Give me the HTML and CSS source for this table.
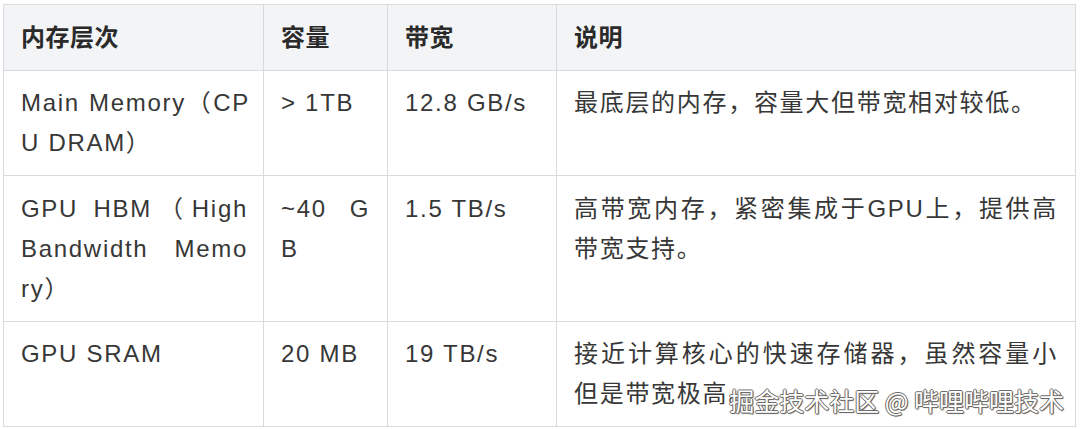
FILE: index.html
```html
<!DOCTYPE html>
<html lang="zh-CN">
<head>
<meta charset="utf-8">
<title>内存层次</title>
<link rel="stylesheet" href="styles.css">
</head>
<body>
<div class="page">
  <table class="mem-table">
    <colgroup>
      <col class="c1"><col class="c2"><col class="c3"><col class="c4">
    </colgroup>
    <thead>
      <tr><th>内存层次</th><th>容量</th><th>带宽</th><th>说明</th></tr>
    </thead>
    <tbody>
      <tr class="r1">
        <td class="name">Main Memory（CPU DRAM）</td>
        <td>&gt; 1TB</td>
        <td>12.8 GB/s</td>
        <td>最底层的内存，容量大但带宽相对较低。</td>
      </tr>
      <tr class="r2">
        <td class="name"><span class="just">GPU HBM（High Bandwidth Memo</span>ry）</td>
        <td>~40 GB</td>
        <td>1.5 TB/s</td>
        <td>高带宽内存，紧密集成于GPU上，提供高带宽支持。</td>
      </tr>
      <tr class="r3">
        <td class="name">GPU SRAM</td>
        <td>20 MB</td>
        <td>19 TB/s</td>
        <td>接近计算核心的快速存储器，虽然容量小但是带宽极高。</td>
      </tr>
    </tbody>
  </table>
  <div class="watermark">掘金技术社区 @ 哔哩哔哩技术</div>
</div>
</body>
</html>
```

FILE: styles.css
```css
html, body {
  margin: 0;
  padding: 0;
  background: #ffffff;
}

.page {
  position: relative;
  width: 1080px;
  height: 429px;
  padding: 4px 0 0 3px;
  box-sizing: border-box;
  overflow: hidden;
}

.mem-table {
  border-collapse: collapse;
  table-layout: fixed;
  width: 1072px;
  font-family: "Liberation Sans", "Noto Sans CJK SC", sans-serif;
  font-size: 24px;
  line-height: 40px;
  color: #373737;
  letter-spacing: 1.7px;
}

.c1 { width: 260px; }
.c2 { width: 124px; }
.c3 { width: 169px; }
.c4 { width: 519px; }

.mem-table th,
.mem-table td {
  border: 1px solid #d8dadd;
  padding: 12px 17px 12px 17px;
  text-align: justify;
  vertical-align: top;
  word-break: break-all;
}

.mem-table td.name {
  padding-right: 13px;
}

.mem-table .just {
  display: block;
  margin-right: 2px;
  text-align: justify;
  text-align-last: justify;
  text-justify: inter-word;
}

.mem-table th {
  background: #f3f4f6;
  font-weight: bold;
  color: #2a2a2a;
  padding-top: 13px;
  padding-bottom: 12px;
  letter-spacing: 0.5px;
  text-align: left;
}

.mem-table tr.r2 td {
  padding-top: 13px;
  padding-bottom: 12px;
}

.watermark {
  position: absolute;
  right: 16px;
  bottom: 16px;
  font-family: "Noto Sans CJK SC", "Liberation Sans", sans-serif;
  font-size: 25px;
  line-height: 25px;
  color: #ffffff;
  white-space: nowrap;
  text-shadow:
    1px 0 0 #6b6b6b,
    -1px 0 0 #6b6b6b,
    0 1px 0 #6b6b6b,
    0 -1px 0 #6b6b6b,
    1px 1px 1px #555555;
}
```
